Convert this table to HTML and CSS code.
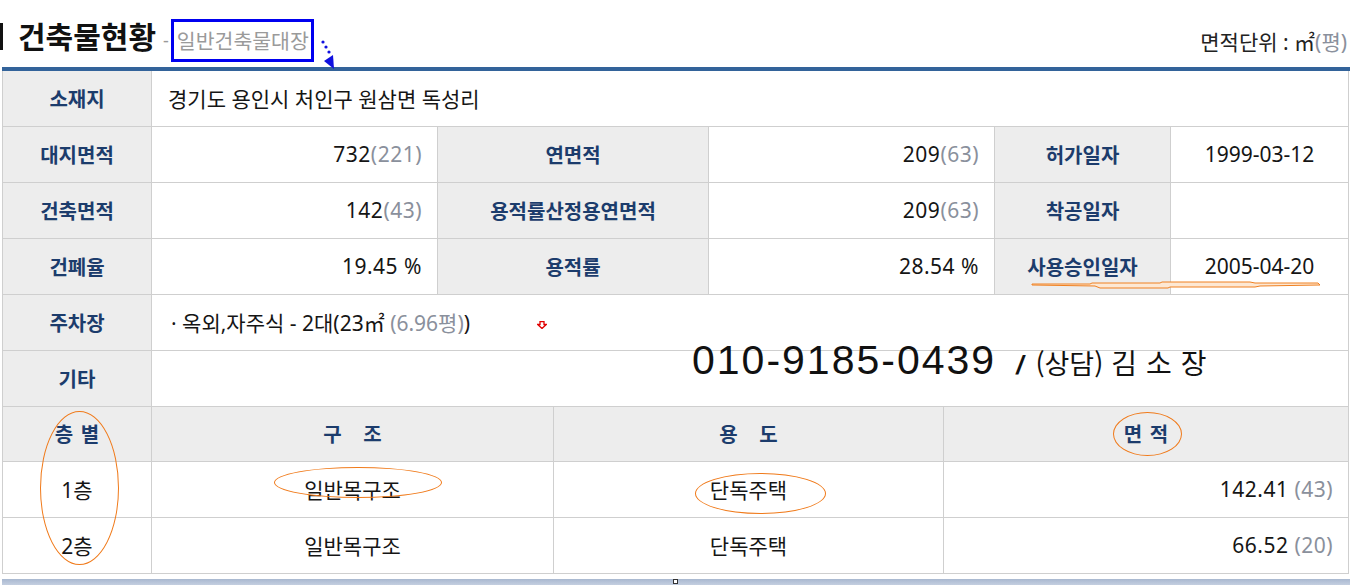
FILE: index.html
```html
<!doctype html>
<html lang="ko">

<head>
    <meta charset="UTF-8">
    <title>건축물현황</title>
    <link rel="stylesheet" href="styles.css">
</head>

<body>
    <div class="sheet">
        <header class="sheet-head">
            <h2 class="sheet-title">
                <span class="title-bar"></span>
                <span class="title-main">건축물현황</span>
                <span class="title-sep">-</span>
                <span class="title-sub">일반건축물대장</span>
            </h2>
            <p class="unit">면적단위 : ㎡<span class="muted">(평)</span></p>
        </header>
        <div class="rule"></div>

        <table class="info">
            <colgroup>
                <col class="c-label">
                <col class="c-num">
                <col class="c-label2">
                <col class="c-num">
                <col class="c-label3">
                <col class="c-date">
            </colgroup>
            <tr class="first">
                <th>소재지</th>
                <td colspan="5" class="left">경기도 용인시 처인구 원삼면 독성리</td>
            </tr>
            <tr>
                <th>대지면적</th>
                <td class="num">732<span class="muted">(221)</span></td>
                <th>연면적</th>
                <td class="num">209<span class="muted">(63)</span></td>
                <th>허가일자</th>
                <td class="center">1999-03-12</td>
            </tr>
            <tr>
                <th>건축면적</th>
                <td class="num">142<span class="muted">(43)</span></td>
                <th>용적률산정용연면적</th>
                <td class="num">209<span class="muted">(63)</span></td>
                <th>착공일자</th>
                <td class="center"></td>
            </tr>
            <tr>
                <th>건폐율</th>
                <td class="num">19.45 %</td>
                <th>용적률</th>
                <td class="num">28.54 %</td>
                <th>사용승인일자</th>
                <td class="center">2005-04-20</td>
            </tr>
            <tr>
                <th>주차장</th>
                <td colspan="5" class="left parking">· 옥외,자주식 - 2대(23㎡ <span class="muted">(6.96평)</span>)</td>
            </tr>
            <tr>
                <th>기타</th>
                <td colspan="5"></td>
            </tr>
        </table>

        <table class="floors">
            <colgroup>
                <col class="f-floor">
                <col class="f-struct">
                <col class="f-use">
                <col class="f-area">
            </colgroup>
            <tr class="head">
                <th>층 별</th>
                <th class="spaced">구 조</th>
                <th class="spaced">용 도</th>
                <th>면 적</th>
            </tr>
            <tr>
                <td>1층</td>
                <td>일반목구조</td>
                <td>단독주택</td>
                <td class="num">142.41 <span class="muted">(43)</span></td>
            </tr>
            <tr>
                <td>2층</td>
                <td>일반목구조</td>
                <td>단독주택</td>
                <td class="num">66.52 <span class="muted">(20)</span></td>
            </tr>
        </table>

        <div class="bottom-bar"><span class="handle"></span></div>

        <!-- annotations drawn over the sheet -->
        <p class="phone"><span class="phone-num">010-9185-0439</span> <span class="phone-slash">/</span> <span class="phone-tag">(상담)</span> <span class="phone-name">김소장</span></p>
        <span class="ring ring-floor"></span>
        <span class="ring ring-struct"></span>
        <span class="ring ring-use"></span>
        <span class="ring ring-area"></span>
        <svg class="arrow-blue" width="20" height="32" viewBox="0 0 20 32">
            <circle cx="3" cy="3" r="1.6" fill="#1010e0"/>
            <circle cx="6" cy="8" r="1.6" fill="#1010e0"/>
            <circle cx="9" cy="13" r="1.6" fill="#1010e0"/>
            <polygon points="4,22 13,16 14,30" fill="#1010e0"/>
        </svg>
        <svg class="arrow-red" width="10" height="8" viewBox="0 0 10 8">
            <path d="M3 0.5 H7 V3.5 H9.3 L5 7.5 L0.7 3.5 H3 Z" fill="#fff" stroke="#e00000" stroke-width="1.3"/>
        </svg>
        <svg class="squiggle" width="292" height="10" viewBox="0 0 292 10">
            <path d="M2 3 L60 3 L62 2 L130 2 L132 1 L220 1 L225 2 L288 2 L290 4 L230 5 L225 6 L140 6 L138 7 L70 7 L65 5 L2 4 Z" fill="#fde8d4" stroke="#f08020" stroke-width="1"/>
        </svg>
    </div>
</body>

</html>
```

FILE: styles.css
```css
@charset "UTF-8";
*,
*:after,
*:before {
    box-sizing: border-box;
    padding: 0;
    margin: 0;
}

body {
    font-family: "Noto Sans", "Noto Sans CJK KR", sans-serif;
    color: #151515;
    background: #fff;
}

.sheet {
    position: relative;
    width: 1350px;
    height: 585px;
    overflow: hidden;
}

.muted {
    color: #8a909c;
}

/* header */

.sheet-head {
    display: flex;
    justify-content: space-between;
    align-items: flex-start;
    height: 67px;
    padding-top: 19px;
}

.sheet-title {
    display: flex;
    align-items: flex-start;
    font-weight: normal;
    white-space: nowrap;
}

.title-bar {
    width: 3px;
    height: 27px;
    background: #111;
    margin-top: 4px;
}

.title-main {
    font-family: "Noto Sans CJK KR", sans-serif;
    font-size: 30px;
    font-weight: bold;
    color: #111;
    margin-left: 15px;
    line-height: 34px;
    margin-top: -1px;
}

.title-sep {
    font-size: 18px;
    color: #999;
    margin: 10px 2px 0 7px;
    line-height: 22px;
}

.title-sub {
    font-family: "Noto Sans CJK KR", sans-serif;
    font-size: 20.5px;
    color: #9a9a9a;
    border: 3px solid #0000f0;
    height: 43px;
    line-height: 36px;
    padding: 0 2px 0 3px;
    white-space: nowrap;
}

.unit {
    font-size: 21px;
    color: #222;
    margin: 9px 3px 0 0;
    line-height: 28px;
}

.rule {
    margin-left: 2px;
    height: 4px;
    background: #33639a;
}

/* tables */

table {
    border-collapse: collapse;
    table-layout: fixed;
    margin-left: 2px;
    width: 1346px;
}

th,
td {
    border: 1px solid #cfcfcf;
    height: 56px;
    font-size: 21px;
    font-weight: normal;
    text-align: center;
    padding: 0 15px;
    white-space: nowrap;
}

td.num {
    text-align: right;
    letter-spacing: 0.5px;
}

th {
    background: #ededed;
    color: #1c3c6c;
    font-family: "Noto Sans CJK KR", sans-serif;
    font-size: 20px;
    font-weight: bold;
}

.info tr.first th,
.info tr.first td {
    border-top: none;
    height: 55px;
}

.c-label { width: 149px; }
.c-num { width: 286px; }
.c-label2 { width: 271px; }
.c-label3 { width: 176px; }
.c-date { width: 178px; }

.info td.left {
    text-align: left;
    padding-left: 16px;
}

.info td.parking {
    padding-left: 19px;
}

td.center {
    text-align: center;
}

.floors {
    margin-top: -1px;
}

.floors th,
.floors td {
    height: 56px;
}

.floors tr.head th {
    height: 55px;
    word-spacing: 2px;
}

.floors tr.head th.spaced {
    word-spacing: 16px;
}

.f-floor { width: 149px; }
.f-struct { width: 402px; }
.f-use { width: 390px; }
.f-area { width: 405px; }

.bottom-bar {
    position: relative;
    margin: 5px 0 0 2px;
    height: 8px;
    background: linear-gradient(#a9b8d0, #cdd6e5);
}

.handle {
    position: absolute;
    left: 671px;
    top: 0;
    width: 5px;
    height: 5px;
    border: 1px solid #333;
    background: #fff;
}

/* annotations */

.phone {
    position: absolute;
    left: 692px;
    top: 337px;
    color: #111;
    white-space: nowrap;
    display: flex;
    align-items: baseline;
}

.phone-num {
    font-family: "Liberation Sans", sans-serif;
    font-size: 41px;
    letter-spacing: 2px;
    margin-right: 20px;
}

.phone-slash {
    font-family: "Liberation Sans", sans-serif;
    font-size: 26px;
    font-weight: bold;
    font-style: italic;
    margin-right: 12px;
}

.phone-tag {
    font-family: "Noto Sans CJK KR", sans-serif;
    font-size: 27px;
    margin-right: 8px;
}

.phone-name {
    font-family: "Noto Sans CJK KR", sans-serif;
    font-size: 28px;
    letter-spacing: 9px;
}

.ring {
    position: absolute;
    border: 1px solid #f07a1a;
    border-radius: 50%;
}

.ring-floor {
    left: 40px;
    top: 411px;
    width: 79px;
    height: 154px;
}

.ring-struct {
    left: 274px;
    top: 467px;
    width: 168px;
    height: 31px;
}

.ring-use {
    left: 695px;
    top: 473px;
    width: 131px;
    height: 41px;
}

.ring-area {
    left: 1113px;
    top: 412px;
    width: 69px;
    height: 44px;
}

.arrow-blue {
    position: absolute;
    left: 320px;
    top: 39px;
}

.arrow-red {
    position: absolute;
    left: 537px;
    top: 321px;
}

.squiggle {
    position: absolute;
    left: 1030px;
    top: 281px;
}
```
